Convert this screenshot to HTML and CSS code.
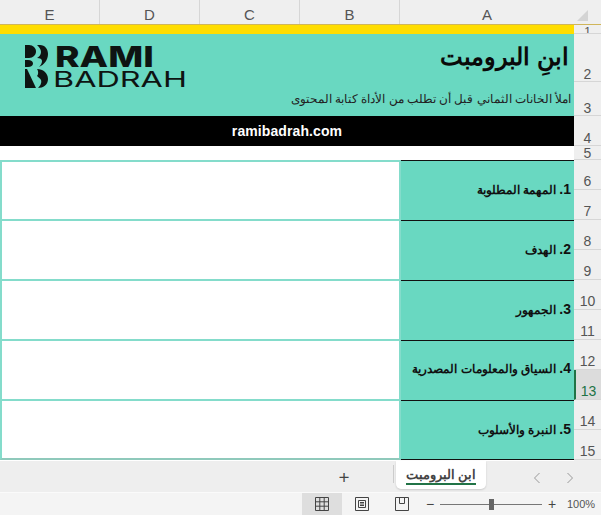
FILE: index.html
```html
<!DOCTYPE html>
<html lang="ar">
<head>
    <meta charset="UTF-8">
    <meta name="viewport" content="width=device-width, initial-scale=1.0">
    <title>ابن البرومبت</title>
    <link rel="stylesheet" href="styles.css">
</head>
<body>
    <div class="app">
        <div class="col-head">
            <div class="col-name">E</div>
            <div class="col-name">D</div>
            <div class="col-name">C</div>
            <div class="col-name">B</div>
            <div class="col-name col-a">A</div>
            <div class="corner"></div>
        </div>

        <div class="sheet">
            <div class="cells">
                <div class="yellow-row"></div>
                <div class="banner">
                    <div class="logo">
                        <svg class="logo-mark" width="24" height="44" viewBox="0 0 24 44">
                            <path d="M0 0h4c4 0 7 3 7 6.500s-3 6.500-7 6.500H0z"/>
                            <path d="M0 15h3c3 0 5 1.500 5 3.500s-2 3.500-5 3.500H0z"/>
                            <path d="M12 0h3c5 0 8 4 8 9 0 6-4 11-9 13 2-2 3-4 3-6s-2-3-5-3c2-1 4-3 4-6s-2-5-4-7z"/>
                            <path d="M0 24h2l9 19H0z"/>
                            <path d="M12 24c6 0 11 4 11 10s-5 9-10 9c2-2 4-5 3-8-1-2-3-3-4-4 1-1 2-4 0-7z"/>
                        </svg>
                        <div class="logo-text">
                            <div class="logo-rami">RAMI</div>
                            <div class="logo-badrah">BADRAH</div>
                        </div>
                    </div>
                    <div class="banner-text" dir="rtl">
                        <div class="banner-title">ابنِ البرومبت</div>
                        <div class="banner-sub">املأ الخانات الثماني قبل أن تطلب من الأداة كتابة المحتوى</div>
                    </div>
                </div>
                <div class="site-row">ramibadrah.com</div>
                <div class="gap-row"></div>

                <div class="form-row">
                    <div class="answer"></div>
                    <div class="label"><b>1.</b> المهمة المطلوبة</div>
                </div>
                <div class="form-row">
                    <div class="answer"></div>
                    <div class="label"><b>2.</b> الهدف</div>
                </div>
                <div class="form-row">
                    <div class="answer"></div>
                    <div class="label"><b>3.</b> الجمهور</div>
                </div>
                <div class="form-row">
                    <div class="answer"></div>
                    <div class="label"><b>4.</b> السياق والمعلومات المصدرية</div>
                </div>
                <div class="form-row">
                    <div class="answer"></div>
                    <div class="label"><b>5.</b> النبرة والأسلوب</div>
                </div>
            </div>

            <div class="row-head">
                <div class="row-num r1">1</div>
                <div class="row-num r2">2</div>
                <div class="row-num r3">3</div>
                <div class="row-num r4">4</div>
                <div class="row-num r5">5</div>
                <div class="row-num">6</div>
                <div class="row-num">7</div>
                <div class="row-num">8</div>
                <div class="row-num">9</div>
                <div class="row-num">10</div>
                <div class="row-num">11</div>
                <div class="row-num">12</div>
                <div class="row-num active">13</div>
                <div class="row-num">14</div>
                <div class="row-num">15</div>
            </div>
        </div>

        <div class="tabs">
            <button class="add-sheet">+</button>
            <span class="tab-sep"></span>
            <div class="tab"><span class="tab-name">ابن البرومبت</span></div>
            <div class="tab-arrows">
                <svg width="8" height="12" viewBox="0 0 8 12"><path d="M6.500 1 1.500 6l5 5"/></svg>
                <svg width="8" height="12" viewBox="0 0 8 12"><path d="M1.500 1 6.500 6l-5 5"/></svg>
            </div>
        </div>

        <div class="status">
            <div class="view view-on">
                <svg width="14" height="14" viewBox="0 0 14 14"><path d="M.5.500h13v13H.5zM.5 4.800h13M.5 9.200h13M4.800.500v13M9.200.500v13"/></svg>
            </div>
            <div class="view">
                <svg width="14" height="14" viewBox="0 0 14 14"><path d="M.5.500h13v13H.5zM3.500 3.500h7v7h-7zM5 5.500h4M5 7h4M5 8.500h4"/></svg>
            </div>
            <div class="view">
                <svg width="14" height="14" viewBox="0 0 14 14"><path d="M.5.500h13v13H.5zM4.500.500v6h5v-6"/></svg>
            </div>
            <div class="zoom">
                <span class="zoom-btn">−</span>
                <div class="slider"><span class="thumb"></span></div>
                <span class="zoom-btn">+</span>
            </div>
            <div class="zoom-pct">100%</div>
        </div>
    </div>
</body>
</html>
```

FILE: styles.css
```css
* {
    box-sizing: border-box;
}
body {
    margin: 0;
    font-family: "Liberation Sans", "Noto Sans", sans-serif;
    background-color: #fff;
}
.app {
    width: 601px;
    height: 515px;
    overflow: hidden;
    display: flex;
    flex-direction: column;
    background-color: #eeeeee;
}

/* column letters */
.col-head {
    height: 25px;
    display: flex;
    background-color: #efefef;
    border-bottom: 1px solid #d0b65a;
}
.col-name {
    width: 100px;
    text-align: center;
    font-size: 15px;
    line-height: 30px;
    height: 24px;
    color: #555;
    border-right: 1px solid #d6d6d6;
}
.col-name.col-a {
    width: 174px;
    border-right: none;
}
.corner {
    flex: 1;
    position: relative;
}
.corner::after {
    content: "";
    position: absolute;
    left: 3px;
    top: 10px;
    border-style: solid;
    border-width: 0 0 11px 11px;
    border-color: transparent transparent #d4d4d4 transparent;
}

/* grid area */
.sheet {
    display: flex;
    height: 436px;
}
.cells {
    width: 574px;
    background-color: #fff;
}
.yellow-row {
    height: 9px;
    background-color: #ffdd00;
}
.banner {
    height: 82px;
    background-color: #69d8c1;
    display: flex;
    justify-content: space-between;
}
.logo {
    display: flex;
    gap: 6px;
    padding: 11px 0 0 25px;
}
.logo-mark {
    fill: #0e1412;
}
.logo-text {
    color: #0e1412;
    font-family: Inter, "Liberation Sans", sans-serif;
}
.logo-rami {
    font-size: 29px;
    font-weight: 800;
    line-height: 24px;
    transform: scaleX(1.28);
    transform-origin: left;
}
.logo-badrah {
    font-size: 22px;
    font-weight: 400;
    line-height: 20px;
    margin-left: -2px;
    transform: scaleX(1.47);
    transform-origin: left;
}
.banner-text {
    padding: 0 3px 0 5px;
}
.banner-title {
    font-size: 23.5px;
    font-weight: bold;
    line-height: 30px;
    margin: 8px 2px 0 0;
    color: #0a0a0a;
}
.banner-sub {
    font-size: 11.6px;
    line-height: 16px;
    margin-top: 19px;
    color: #222;
}
.site-row {
    height: 30px;
    background-color: #000;
    color: #fff;
    font-size: 14px;
    font-weight: bold;
    letter-spacing: 0.1px;
    text-align: center;
    line-height: 30px;
}
.gap-row {
    height: 14px;
    background-color: #fff;
}
.form-row {
    height: 60px;
    display: flex;
}
.answer {
    width: 401px;
    background-color: #fff;
    border: 2px solid #84dccb;
    border-bottom-width: 1px;
}
.form-row + .form-row .answer {
    border-top-width: 1px;
}
.form-row:last-child .answer {
    border-bottom: 2px solid #8fc9bb;
}
.label {
    flex: 1;
    background-color: #69d8c1;
    border-top: 1px solid #111;
    direction: rtl;
    font-size: 12.2px;
    font-weight: bold;
    color: #111;
    padding: 18px 3px 0 0;
    line-height: 20px;
}
.form-row:last-child .label {
    border-bottom: 1px solid #111;
}
.form-row:nth-child(8) .label {
    padding-top: 17px;
}
.label b {
    font-size: 14px;
}

/* row numbers */
.row-head {
    flex: 1;
    background-color: #efefef;
    color: #555;
    font-size: 14px;
    text-align: center;
}
.row-num {
    height: 30px;
    line-height: 42px;
    border-bottom: 1px solid #d6d6d6;
    overflow: hidden;
}
.row-num.r1 {
    height: 9px;
    line-height: 14px;
    font-size: 12px;
}
.row-num.r2 {
    height: 48px;
    line-height: 80px;
}
.row-num.r3 {
    height: 34px;
    line-height: 52px;
}
.row-num.r4 {
    height: 30px;
    line-height: 44px;
}
.row-num.r5 {
    height: 14px;
    line-height: 14px;
}
.row-num.active {
    background-color: #dcdcdc;
    color: #217346;
    border-left: 2px solid #217346;
}

/* sheet tabs */
.tabs {
    height: 32px;
    display: flex;
    align-items: flex-start;
    background-color: #eeeeee;
    border-bottom: 1px solid #fafafa;
}
.add-sheet {
    width: 20px;
    height: 26px;
    margin-left: 334px;
    padding: 0;
    border: none;
    background: none;
    font-family: Inter, sans-serif;
    font-size: 20px;
    font-weight: 300;
    line-height: 30px;
    color: #444;
}
.tab-sep {
    width: 1px;
    height: 18px;
    margin: 4px 0 0 39px;
    background-color: #ccc;
}
.tab {
    width: 90px;
    height: 28px;
    margin-left: 2px;
    background-color: #fff;
    border-radius: 0 0 5px 5px;
    box-shadow: 0 1px 2px rgba(0, 0, 0, 0.15);
    text-align: center;
    direction: rtl;
}
.tab-name {
    display: inline-block;
    font-size: 13px;
    font-weight: bold;
    line-height: 17px;
    padding-top: 5px;
    color: #444;
    border-bottom: 2px solid #217346;
}
.tab-arrows {
    flex: 1;
    display: flex;
    gap: 25px;
    padding: 11px 0 0 47px;
}
.tab-arrows path {
    fill: none;
    stroke: #999;
    stroke-width: 1;
}

/* status bar */
.status {
    flex: 1;
    display: flex;
    background-color: #f4f4f4;
    padding-left: 302px;
}
.view {
    width: 40px;
    display: flex;
    align-items: center;
    justify-content: center;
}
.view-on {
    background-color: #dedede;
}
.view path {
    fill: none;
    stroke: #444;
    stroke-width: 1;
}
.zoom {
    display: flex;
    align-items: center;
    margin-left: 2px;
    gap: 4px;
}
.zoom-btn {
    font-size: 14px;
    color: #444;
    width: 12px;
    text-align: center;
}
.slider {
    width: 102px;
    height: 1px;
    background-color: #777;
    position: relative;
}
.thumb {
    position: absolute;
    left: 49px;
    top: -5px;
    width: 5px;
    height: 11px;
    background-color: #666;
}
.zoom-pct {
    margin-left: 9px;
    font-size: 11px;
    line-height: 22px;
    color: #555;
}
```
